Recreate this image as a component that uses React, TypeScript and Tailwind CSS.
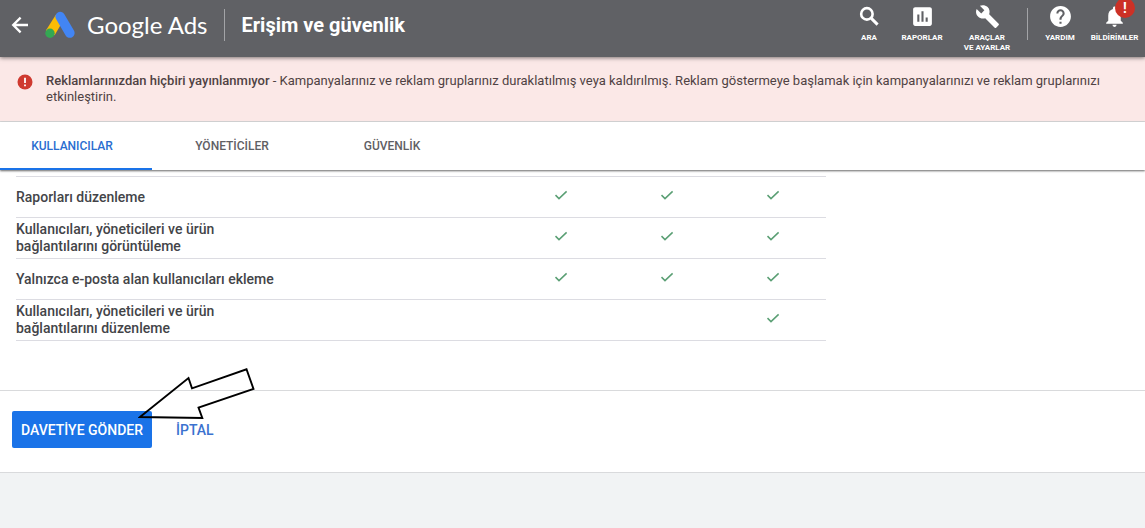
import type { ReactNode } from "react";
import { MdAssessment, MdBuild, MdHelp, MdNotifications } from "react-icons/md";

type Permission = { label: string; granted: [boolean, boolean, boolean] };

const permissions: Permission[] = [
  { label: "Raporları düzenleme", granted: [true, true, true] },
  {
    label: "Kullanıcıları, yöneticileri ve ürün bağlantılarını görüntüleme",
    granted: [true, true, true],
  },
  { label: "Yalnızca e-posta alan kullanıcıları ekleme", granted: [true, true, true] },
  {
    label: "Kullanıcıları, yöneticileri ve ürün bağlantılarını düzenleme",
    granted: [false, false, true],
  },
];

const tabs = ["KULLANICILAR", "YÖNETİCİLER", "GÜVENLİK"];

function AdsLogo() {
  return (
    <svg viewBox="0 0 30 28" className="h-7 w-[30px] shrink-0" aria-hidden="true">
      <path d="M11 3.4 19 8.2 9.6 24.2 0.9 19.6Z" fill="#fbbc04" />
      <circle cx="5" cy="22.2" r="4.7" fill="#34a853" />
      <path d="M15.2 5.6 24.8 22" stroke="#4285f4" strokeWidth="9.6" strokeLinecap="round" />
    </svg>
  );
}

function BackArrow() {
  return (
    <svg viewBox="0 0 24 24" className="size-6" fill="none" stroke="currentColor" aria-hidden="true">
      <path d="M20 12H5.5M12.6 4.6 5.2 12l7.4 7.4" strokeWidth="2.3" />
    </svg>
  );
}

function SearchIcon() {
  return (
    <svg
      viewBox="0 0 24 24"
      className="size-[25px]"
      fill="none"
      stroke="currentColor"
      aria-hidden="true"
    >
      <circle cx="9.5" cy="9.5" r="5.5" strokeWidth="2.5" />
      <path d="M13.8 13.8 19.8 19.8" strokeWidth="2.8" />
    </svg>
  );
}

function CheckMark() {
  return (
    <svg
      viewBox="0 0 14 10"
      className="mx-auto mb-1 block h-[10px] w-[14px]"
      role="img"
      aria-label="Var"
    >
      <path d="M1.5 5.1 5 8.6 12.6 1.4" fill="none" stroke="#5a9f74" strokeWidth="1.5" />
    </svg>
  );
}

function NavButton({
  icon,
  width,
  children,
}: {
  icon: ReactNode;
  width: string;
  children: ReactNode;
}) {
  return (
    <button
      type="button"
      className={`flex flex-col items-center gap-1 text-[8px] leading-[10px] font-bold ${width}`}
    >
      {icon}
      <span className="whitespace-nowrap">{children}</span>
    </button>
  );
}

function Header() {
  return (
    <header className="relative z-10 flex h-[57px] items-start justify-between bg-[#606165] text-white shadow-[0_1px_4px_rgba(0,0,0,0.5)]">
      <div className="flex h-[50px] items-center">
        <button type="button" aria-label="Geri" className="ml-2">
          <BackArrow />
        </button>
        <a href="#" className="ml-[13px] flex items-center gap-3">
          <AdsLogo />
          <span className="font-['Lato',sans-serif] text-2xl">Google Ads</span>
        </a>
        <div className="ml-4 h-8 w-px bg-[#a3a4a7]" />
        <h1 className="ml-[17px] text-xl font-bold">Erişim ve güvenlik</h1>
      </div>
      <nav className="flex items-start pt-1">
        <NavButton icon={<SearchIcon />} width="w-[46px]">
          ARA
        </NavButton>
        <NavButton icon={<MdAssessment size={25} />} width="w-[60px]">
          RAPORLAR
        </NavButton>
        <NavButton icon={<MdBuild size={25} />} width="w-[70px]">
          ARAÇLAR
          <br />
          VE AYARLAR
        </NavButton>
        <div className="mt-1 mr-2 ml-[5px] h-8 w-px bg-[#a3a4a7]" />
        <NavButton icon={<MdHelp size={25} />} width="w-12">
          YARDIM
        </NavButton>
        <NavButton
          width="w-[61px]"
          icon={
            <span className="relative">
              <MdNotifications size={25} />
              <span className="absolute -top-[6px] left-[13px] flex size-5 items-center justify-center rounded-full bg-[#cc3126] text-sm leading-none font-bold">
                !
              </span>
            </span>
          }
        >
          BİLDİRİMLER
        </NavButton>
      </nav>
    </header>
  );
}

function Banner() {
  return (
    <div
      role="alert"
      className="flex h-[65px] items-start gap-3 border-b border-[#d9d9da] bg-[#fbe8e7] px-4 pt-4 text-[#4f4243]"
    >
      <svg viewBox="0 0 18 18" className="size-[18px] shrink-0" aria-hidden="true">
        <circle cx="9" cy="9" r="7.5" fill="#cf3a30" />
        <path d="M9 4.8V10M9 11.4V13.2" stroke="#fff" strokeWidth="1.8" />
      </svg>
      <p className="text-[13px] leading-4">
        <strong className="font-medium">Reklamlarınızdan hiçbiri yayınlanmıyor</strong> -
        Kampanyalarınız ve reklam gruplarınız duraklatılmış veya kaldırılmış. Reklam göstermeye
        başlamak için kampanyalarınızı ve reklam gruplarınızı etkinleştirin.
      </p>
    </div>
  );
}

function Tabs() {
  return (
    <div
      role="tablist"
      className="relative flex h-12 bg-white shadow-[0_1px_2px_rgba(0,0,0,0.6)]"
    >
      {tabs.map((tab, i) => (
        <button
          key={tab}
          type="button"
          role="tab"
          aria-selected={i === 0}
          className={
            i === 0
              ? "w-[152px] border-b-2 border-[#1a73e8] pt-[2px] pr-2 text-xs font-medium text-[#2a6dd0]"
              : "w-40 border-b-2 border-transparent pt-[2px] text-xs font-medium text-[#5f6064]"
          }
        >
          {tab}
        </button>
      ))}
    </div>
  );
}

function PermissionTable() {
  return (
    <table className="w-full max-w-[810px] table-fixed border-collapse text-sm leading-[17px] text-[#434448]">
      <colgroup>
        <col />
        <col className="w-[106px]" />
        <col className="w-[106px]" />
        <col className="w-[106px]" />
      </colgroup>
      <tbody>
        {permissions.map((row) => (
          <tr key={row.label} className="h-[41px] border-y border-[#dcdce2]">
            <th scope="row" className="p-0 text-left align-middle font-medium">
              <div className="max-w-[270px]">{row.label}</div>
            </th>
            {row.granted.map((ok, i) => (
              <td key={i} className="p-0 align-middle">
                {ok && <CheckMark />}
              </td>
            ))}
          </tr>
        ))}
      </tbody>
    </table>
  );
}

function PointerArrow() {
  return (
    <svg
      viewBox="0 0 120 56"
      className="pointer-events-none absolute -top-11 left-[126px] h-14 w-[120px]"
      aria-hidden="true"
    >
      <path
        d="M2 50 50.5 11 54 21.3 108.5 2.3 115.5 22 60.5 40.7 64.3 51Z"
        fill="none"
        stroke="#000"
        strokeWidth="1.9"
      />
    </svg>
  );
}

export default function App() {
  return (
    <div className="min-h-screen bg-[#f1f3f4] font-['Roboto',sans-serif]">
      <Header />
      <Banner />
      <Tabs />
      <main className="border-b border-[#d9dadc] bg-white">
        <div className="px-4 pt-[6px] pb-[49px]">
          <PermissionTable />
        </div>
        <div className="flex items-start border-t border-[#d9dadc] px-3 pt-5 pb-6">
          <div className="relative flex items-center gap-4">
            <button
              type="button"
              className="h-[37px] w-[140px] rounded-[2px] bg-[#1a73e8] text-sm font-medium whitespace-nowrap text-white"
            >
              DAVETİYE GÖNDER
            </button>
            <button type="button" className="h-[37px] px-2 text-sm font-medium text-[#3b72cf]">
              İPTAL
            </button>
            <PointerArrow />
          </div>
        </div>
      </main>
    </div>
  );
}
